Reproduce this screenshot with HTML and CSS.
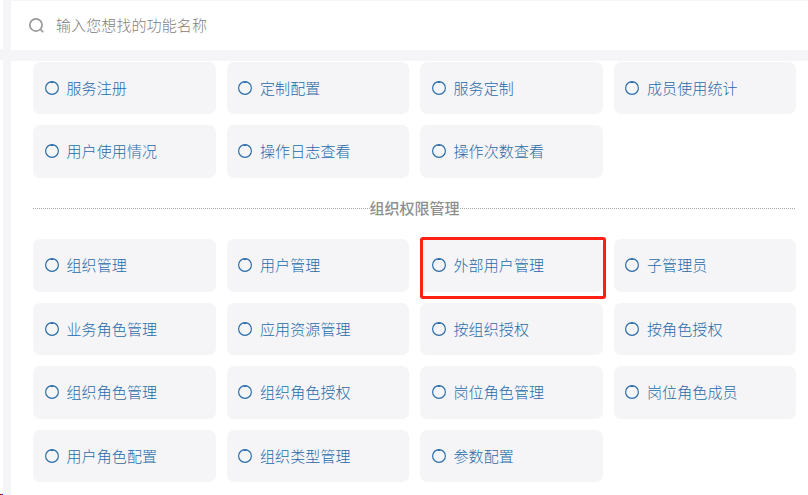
FILE: index.html
```html
<!DOCTYPE html>
<html lang="zh-CN">
<head>
<meta charset="utf-8">
<title>功能导航</title>
<link rel="stylesheet" href="styles.css">
</head>
<body>
<svg class="defs" width="0" height="0"><symbol id="ring" viewBox="0 0 14 14"><circle cx="7" cy="7" r="6.4" fill="none" stroke="currentColor" stroke-width="1.15"/><path d="M5.500 1.500h3" stroke="currentColor"/></symbol></svg>
<div class="app">
  <aside class="rail"><div class="rail-top"></div><div class="rail-body"></div><i class="mark"></i></aside>
  <div class="page">
    <label class="search">
      <svg class="search-icon" viewBox="0 0 16 16"><circle cx="7.4" cy="7.4" r="6.5"/><path d="M11.800 11.800l3.400 3.400"/></svg>
      <span>输入您想找的功能名称</span>
    </label>
    <main class="content">
      <div class="grid">
        <a class="card"><svg><use href="#ring"/></svg>服务注册</a>
        <a class="card"><svg><use href="#ring"/></svg>定制配置</a>
        <a class="card"><svg><use href="#ring"/></svg>服务定制</a>
        <a class="card"><svg><use href="#ring"/></svg>成员使用统计</a>
        <a class="card"><svg><use href="#ring"/></svg>用户使用情况</a>
        <a class="card"><svg><use href="#ring"/></svg>操作日志查看</a>
        <a class="card"><svg><use href="#ring"/></svg>操作次数查看</a>
      </div>
      <h2 class="divider"><span>组织权限管理</span></h2>
      <div class="grid">
        <a class="card"><svg><use href="#ring"/></svg>组织管理</a>
        <a class="card"><svg><use href="#ring"/></svg>用户管理</a>
        <a class="card marked"><svg><use href="#ring"/></svg>外部用户管理</a>
        <a class="card"><svg><use href="#ring"/></svg>子管理员</a>
        <a class="card"><svg><use href="#ring"/></svg>业务角色管理</a>
        <a class="card"><svg><use href="#ring"/></svg>应用资源管理</a>
        <a class="card"><svg><use href="#ring"/></svg>按组织授权</a>
        <a class="card"><svg><use href="#ring"/></svg>按角色授权</a>
        <a class="card"><svg><use href="#ring"/></svg>组织角色管理</a>
        <a class="card"><svg><use href="#ring"/></svg>组织角色授权</a>
        <a class="card"><svg><use href="#ring"/></svg>岗位角色管理</a>
        <a class="card"><svg><use href="#ring"/></svg>岗位角色成员</a>
        <a class="card"><svg><use href="#ring"/></svg>用户角色配置</a>
        <a class="card"><svg><use href="#ring"/></svg>组织类型管理</a>
        <a class="card"><svg><use href="#ring"/></svg>参数配置</a>
      </div>
    </main>
  </div>
</div>
</body>
</html>
```
FILE: styles.css
```css
* { box-sizing: border-box; }
body {
  margin: 0;
  height: 495px;
  overflow: hidden;
  background: #f5f5f8;
  font: 300 15px/20px "Noto Sans CJK SC", sans-serif;
}
.defs { position: absolute; }
.app { display: flex; height: 495px; }
.rail {
  position: relative;
  width: 3px;
  margin-right: 8px;
  display: flex;
  flex-direction: column;
  gap: 11px;
}
.rail-top { height: 49px; background: #fff; }
.rail-body { flex: 1; background: #fff; }
.mark {
  position: absolute;
  left: 0;
  bottom: 0;
  width: 3px;
  height: 1px;
  background: linear-gradient(90deg, #f00 1px, #0a0 1px 2px, #00f 2px);
}
.page { flex: 1; display: flex; flex-direction: column; gap: 11px; padding-top: 1px; }
.search {
  height: 49px;
  flex: none;
  display: flex;
  align-items: center;
  padding: 0 0 1px 18px;
  gap: 12px;
  background: #fff;
  color: #808080;
  letter-spacing: 0.1px;
}
.search-icon { width: 15px; height: 15px; fill: none; stroke: #999; stroke-width: 1.8; }
.content { flex: 1; padding: 0.6px 12px 0 22px; background: #fff; }
.grid {
  display: grid;
  grid-template-columns: repeat(4, 1fr);
  grid-auto-rows: 52.6px;
  gap: 11px;
}
.card {
  position: relative;
  display: flex;
  align-items: center;
  gap: 8px;
  padding: 0 0 0.4px 11.5px;
  border-radius: 7px;
  background: #f5f5f8;
  color: #286ba8;
  letter-spacing: 0.1px;
}
.card svg { width: 14px; height: 14px; flex: none; }
.marked::after {
  content: "";
  position: absolute;
  inset: -2px -3px -7px 0;
  border: 3px solid #ff1f13;
  border-radius: 3px;
}
.divider {
  display: flex;
  align-items: center;
  height: 20px;
  margin: 20.8px 0 20.4px;
  font-size: 15px;
  font-weight: 500;
  color: #8e8e8e;
}
.divider span { padding-bottom: 2px; }
.divider::before,
.divider::after {
  content: "";
  flex: 1;
  height: 1px;
  background: repeating-linear-gradient(90deg, #aaa 0 1px, #fff 1px 2px);
}
```
